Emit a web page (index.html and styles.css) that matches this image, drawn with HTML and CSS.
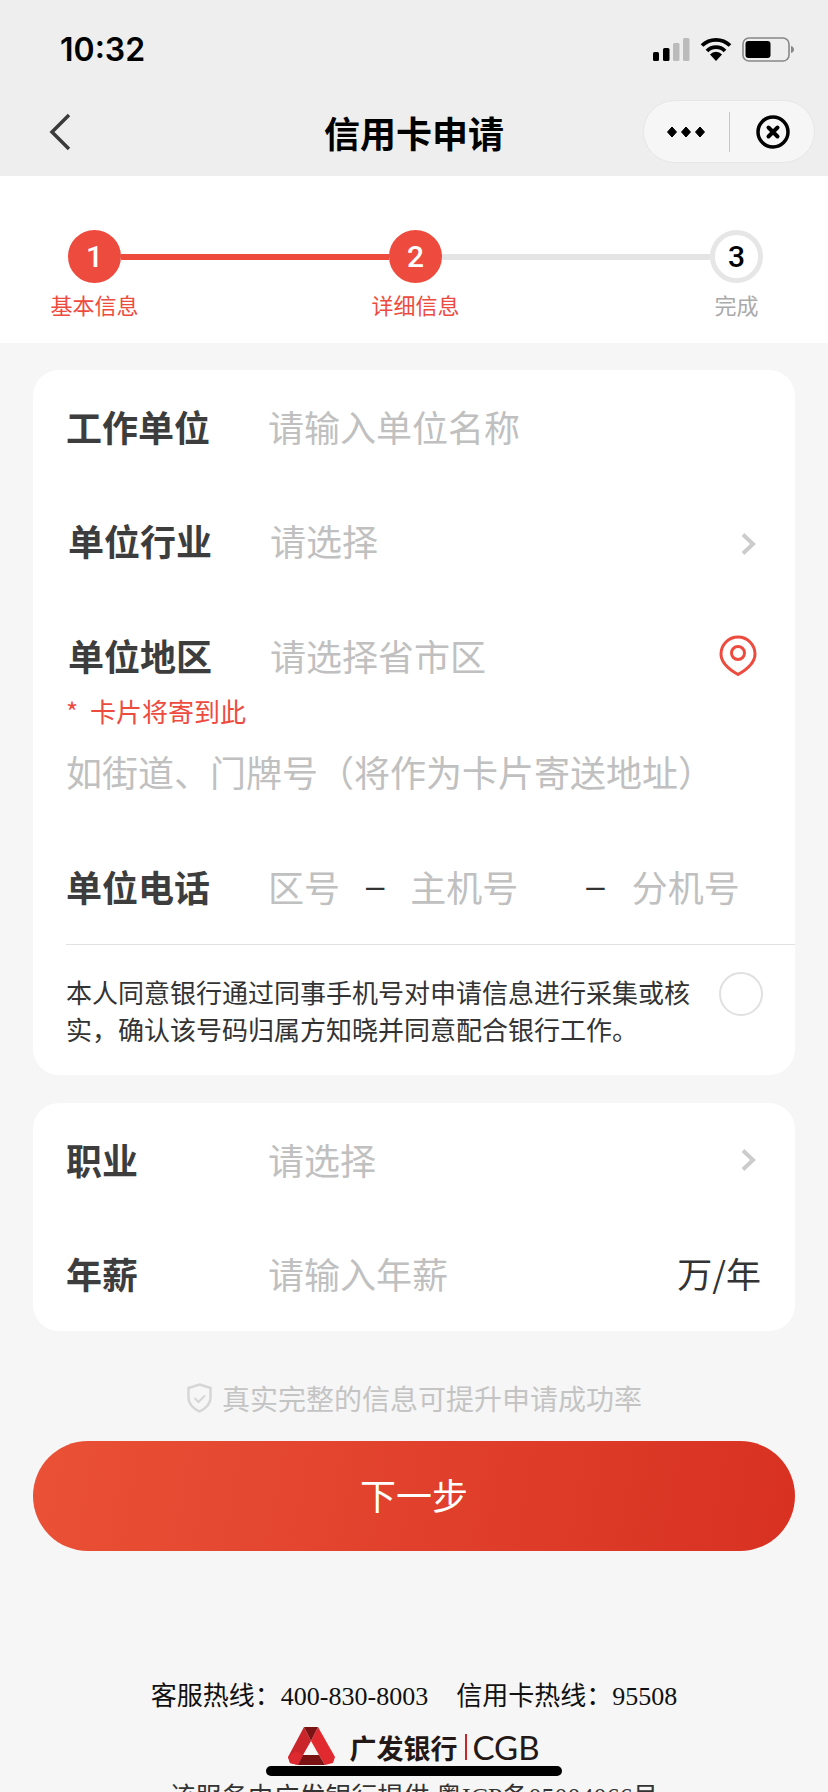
FILE: index.html
```html
<!DOCTYPE html>
<html lang="zh-CN">
  <head>
    <meta charset="UTF-8" />
    <meta name="viewport" content="width=device-width, initial-scale=1.0" />
    <title>信用卡申请</title>
    <link rel="stylesheet" href="styles.css">
  </head>
  <body>
    <div class="page">
      <header class="topbar">
        <div class="status">
          <span class="time">10:32</span>
          <div class="status-icons">
            <svg width="37" height="23" viewBox="0 0 37 23">
              <rect x="0" y="14" width="6" height="9" rx="1.500" fill="#000"/>
              <rect x="10" y="10" width="6.500" height="13" rx="1.500" fill="#000"/>
              <rect x="20" y="5" width="6.500" height="18" rx="1.500" fill="#bbb"/>
              <rect x="30" y="0" width="6.500" height="23" rx="1.500" fill="#bbb"/>
            </svg>
            <svg width="32" height="24" viewBox="0 0 32 24">
              <path d="M2 8.500a20 20 0 0 1 28 0M7 14a12.500 12.500 0 0 1 18 0" fill="none" stroke="#000" stroke-width="3.800"/>
              <path d="M16 24l-6-6.500a8 8 0 0 1 12 0z" fill="#000"/>
            </svg>
            <svg width="52" height="25" viewBox="0 0 52 25">
              <rect x="1" y="1" width="46" height="23" rx="6" fill="none" stroke="#888" stroke-width="1.600"/>
              <rect x="3.500" y="4" width="25" height="17" rx="3" fill="#000"/>
              <path d="M49 9c2 .5 3 2 3 3.500s-1 3-3 3.500z" fill="#888"/>
            </svg>
          </div>
        </div>
        <div class="navbar">
          <svg class="back" width="24" height="38" viewBox="0 0 24 38">
            <path d="M21 2L4 19l17 17" fill="none" stroke="#3a3a3a" stroke-width="3.500"/>
          </svg>
          <h1 class="nav-title">信用卡申请</h1>
          <div class="capsule">
            <svg width="38" height="12" viewBox="0 0 38 12">
              <path d="M5 1l4.500 5L5 11 .5 6zM19 1l4.500 5L19 11l-4.500-5zM33 1l4.500 5L33 11l-4.500-5z" stroke="#000" stroke-linejoin="round"/>
            </svg>
            <span class="capsule-line"></span>
            <svg width="34" height="34" viewBox="0 0 34 34">
              <circle cx="17" cy="17" r="15" fill="none" stroke="#000" stroke-width="3.500"/>
              <path d="M12.500 12.500l9 9M21.500 12.500l-9 9" stroke="#000" stroke-width="4" stroke-linecap="round"/>
            </svg>
          </div>
        </div>
      </header>

      <section class="steps">
        <div class="step active">
          <span class="step-num">1</span>
          <span class="step-name">基本信息</span>
        </div>
        <span class="step-line done"></span>
        <div class="step active">
          <span class="step-num">2</span>
          <span class="step-name">详细信息</span>
        </div>
        <span class="step-line"></span>
        <div class="step">
          <span class="step-num">3</span>
          <span class="step-name">完成</span>
        </div>
      </section>

      <main class="content">
        <div class="card">
          <div class="row">
            <span class="label">工作单位</span>
            <span class="hint grow">请输入单位名称</span>
          </div>
          <div class="row row-inset">
            <span class="label">单位行业</span>
            <span class="hint grow">请选择</span>
            <svg class="arrow" width="16" height="24" viewBox="0 0 16 24">
              <path d="M3 2.500l10 9.500-10 9.500" fill="none" stroke="#cccccc" stroke-width="4"/>
            </svg>
          </div>
          <div class="row row-inset row-area">
            <span class="label">单位地区</span>
            <span class="hint grow">请选择省市区</span>
            <svg class="pin" width="38" height="42" viewBox="0 0 38 42">
              <path d="M19 39.500C11 35 2 28.500 2 19a17 17 0 0 1 34 0c0 9.500-9 16-17 20.500z" fill="none" stroke="#ee4b3f" stroke-width="3"/>
              <circle cx="19" cy="18" r="6.500" fill="none" stroke="#ee4b3f" stroke-width="3"/>
            </svg>
          </div>
          <p class="note">* 卡片将寄到此</p>
          <p class="hint address">如街道、门牌号（将作为卡片寄送地址）</p>
          <div class="row row-phone">
            <span class="label">单位电话</span>
            <span class="hint part-a">区号</span>
            <span class="dash">–</span>
            <span class="hint part-b">主机号</span>
            <span class="dash">–</span>
            <span class="hint part-c">分机号</span>
          </div>
          <div class="consent">
            <p class="consent-text">本人同意银行通过同事手机号对申请信息进行采集或核实，确认该号码归属方知晓并同意配合银行工作。</p>
            <span class="radio"></span>
          </div>
        </div>

        <div class="card card-job">
          <div class="row">
            <span class="label">职业</span>
            <span class="hint grow">请选择</span>
            <svg class="arrow" width="16" height="24" viewBox="0 0 16 24">
              <path d="M3 2.500l10 9.500-10 9.500" fill="none" stroke="#cccccc" stroke-width="4"/>
            </svg>
          </div>
          <div class="row">
            <span class="label">年薪</span>
            <span class="hint grow">请输入年薪</span>
            <span class="unit">万/年</span>
          </div>
        </div>

        <p class="tip">
          <svg width="27" height="30" viewBox="0 0 27 30">
            <path d="M13.500 1.500l11 3.500v10c0 6.500-5 10.500-11 13.500C7.500 25.500 2.500 21.500 2.500 15V5z" fill="none" stroke="#d6d6d6" stroke-width="2.500"/>
            <path d="M8.500 15l4 4 6.500-6.500" fill="none" stroke="#d6d6d6" stroke-width="2"/>
          </svg>
          真实完整的信息可提升申请成功率
        </p>
        <button class="next" type="button">下一步</button>

        <footer class="foot">
          <p class="hotline">客服热线：400-830-8003<span class="gap"></span>信用卡热线：95508</p>
          <div class="logo">
            <svg width="47" height="40" viewBox="0 0 47 40">
              <path d="M16 0L0 30l2 6 8 2 5-10 8-14z" fill="#c9252b"/>
              <path d="M8 24L0 30l2 6 8 2 5-10z" fill="#dc2a30"/>
              <path d="M30 0l17 30-2 6-8 2-6-10-8-14z" fill="#e02a30"/>
              <path d="M16 0h14l-7 14z" fill="#7b1214"/>
              <path d="M10 38l5-10h16l6 10z" fill="#7b1214"/>
            </svg>
            <span class="logo-cn">广发银行</span>
            <span class="logo-bar"></span>
            <span class="logo-en">CGB</span>
          </div>
          <p class="provider">该服务由广发银行提供 粤ICP备05004066号</p>
        </footer>
      </main>
      <span class="home-bar"></span>
    </div>
  </body>
</html>
```

FILE: styles.css
```css
* {
  box-sizing: border-box;
}
body {
  margin: 0;
  background-color: #f6f6f6;
  font-family: "Noto Sans CJK SC", "Liberation Sans", sans-serif;
}
p,
h1 {
  margin: 0;
}
.page {
  position: relative;
  height: 1792px;
  overflow: hidden;
}
.topbar {
  height: 176px;
  background-color: #eeeeee;
}
.status {
  display: flex;
  justify-content: space-between;
  align-items: center;
  height: 98px;
  padding: 0 34px 0 60px;
}
.time {
  font-family: Inter, "Liberation Sans", sans-serif;
  font-size: 32px;
  font-weight: 600;
  color: #000;
}
.status-icons {
  display: flex;
  align-items: center;
  gap: 10px;
}
.navbar {
  position: relative;
  display: flex;
  align-items: center;
  justify-content: center;
  height: 78px;
  padding-bottom: 10px;
}
.back {
  position: absolute;
  left: 48px;
  top: 15px;
}
.nav-title {
  font-size: 36px;
  font-weight: 700;
  color: #000;
}
.capsule {
  position: absolute;
  right: 13px;
  top: 2px;
  display: flex;
  align-items: center;
  width: 172px;
  height: 63px;
  padding-left: 23px;
  background-color: #f6f6f6;
  border: 1px solid #e6e6e6;
  border-radius: 32px;
}
.capsule-line {
  width: 1px;
  height: 40px;
  margin: 0 26px 0 24px;
  background-color: #c8c8c8;
}
.steps {
  display: flex;
  align-items: flex-start;
  height: 167px;
  padding: 54px 65px 0 68px;
  background-color: #fff;
}
.step {
  position: relative;
  flex: none;
  width: 53px;
}
.step-num {
  display: flex;
  align-items: center;
  justify-content: center;
  width: 53px;
  height: 53px;
  border: 5px solid #e6e6e6;
  border-radius: 50%;
  font-family: Roboto, "Liberation Sans", sans-serif;
  font-size: 30px;
  font-weight: 500;
  color: #000;
  background-color: #fff;
}
.step.active .step-num {
  border-color: #ee4b3f;
  background-color: #ee4b3f;
  color: #fff;
}
.step-name {
  position: absolute;
  top: 58px;
  left: 50%;
  transform: translateX(-50%);
  white-space: nowrap;
  font-size: 22px;
  line-height: 32px;
  color: #aaa;
}
.step.active .step-name {
  color: #ee4b3f;
}
.step-line {
  flex: 1;
  height: 6px;
  margin-top: 24px;
  background-color: #e4e4e4;
}
.step-line.done {
  background-color: #ee4b3f;
}
.content {
  padding: 27px 33px 0;
}
.card {
  padding-left: 33px;
  background-color: #fff;
  border-radius: 26px;
}
.card-job {
  height: 228px;
  margin-top: 28px;
}
.row {
  display: flex;
  align-items: center;
  height: 114px;
  padding-right: 34px;
  padding-bottom: 3px;
}
.row-inset {
  padding-left: 2px;
}
.label {
  flex: none;
  width: 202px;
  font-size: 36px;
  font-weight: 700;
  color: #3d3d3d;
}
.hint {
  font-size: 36px;
  color: #c0c0c0;
}
.grow {
  flex: 1;
}
.arrow {
  margin-top: 3px;
  margin-right: 5px;
}
.row-inset .arrow {
  margin-top: 9px;
}
.pin {
  margin-top: 3px;
  margin-right: 4px;
}
.row-area {
  height: 116px;
}
.note {
  margin-top: -22px;
  font-size: 26px;
  line-height: 38px;
  word-spacing: 6px;
  color: #ee4b3f;
}
.address {
  margin-top: 15px;
  line-height: 52px;
  white-space: nowrap;
}
.row-phone {
  margin-top: 33px;
  padding-right: 0;
}
.part-a {
  width: 98px;
}
.part-b {
  width: 176px;
  margin-left: 26px;
}
.part-c {
  margin-left: 27px;
}
.dash {
  font-family: "Liberation Sans", sans-serif;
  font-size: 33px;
  color: #333;
}
.consent {
  display: flex;
  align-items: flex-start;
  justify-content: space-between;
  height: 131px;
  padding-top: 28px;
  padding-right: 32px;
  border-top: 1px solid #e2e2e2;
}
.consent-text {
  width: 630px;
  font-size: 26px;
  line-height: 37px;
  color: #333;
}
.radio {
  flex: none;
  width: 44px;
  height: 44px;
  margin-top: -1px;
  border: 2px solid #e0e0e0;
  border-radius: 50%;
}
.unit {
  font-size: 35px;
  color: #333;
}
.tip {
  display: flex;
  align-items: center;
  justify-content: center;
  gap: 9px;
  margin-top: 47px;
  font-size: 28px;
  line-height: 40px;
  color: #c4c4c4;
}
.next {
  display: block;
  width: 100%;
  height: 110px;
  margin-top: 23px;
  padding-bottom: 5px;
  border: none;
  border-radius: 55px;
  background: linear-gradient(100deg, #ea5136, #d83122);
  color: #fff;
  font-family: inherit;
  font-size: 36px;
}
.foot {
  margin-top: 128px;
  text-align: center;
}
.hotline {
  font-family: "Liberation Serif", "Noto Sans CJK SC", serif;
  font-size: 26px;
  line-height: 36px;
  color: #111;
}
.gap {
  display: inline-block;
  width: 28px;
}
.logo {
  display: flex;
  align-items: center;
  justify-content: center;
  height: 40px;
  margin-top: 12px;
}
.logo svg {
  margin-right: 14px;
}
.logo-cn {
  font-size: 27px;
  font-weight: 700;
  color: #231815;
}
.logo-bar {
  width: 2px;
  height: 26px;
  margin: 0 5px 0 8px;
  background-color: #c8242b;
}
.logo-en {
  font-family: Lato, "Liberation Sans", sans-serif;
  font-size: 33px;
  color: #231815;
}
.provider {
  margin-top: 13px;
  font-family: "Liberation Serif", "Noto Sans CJK SC", serif;
  font-size: 26px;
  line-height: 36px;
  white-space: nowrap;
  color: #333;
}
.home-bar {
  position: absolute;
  left: 266px;
  top: 1766px;
  width: 296px;
  height: 10px;
  border-radius: 5px;
  background-color: #000;
}
```
